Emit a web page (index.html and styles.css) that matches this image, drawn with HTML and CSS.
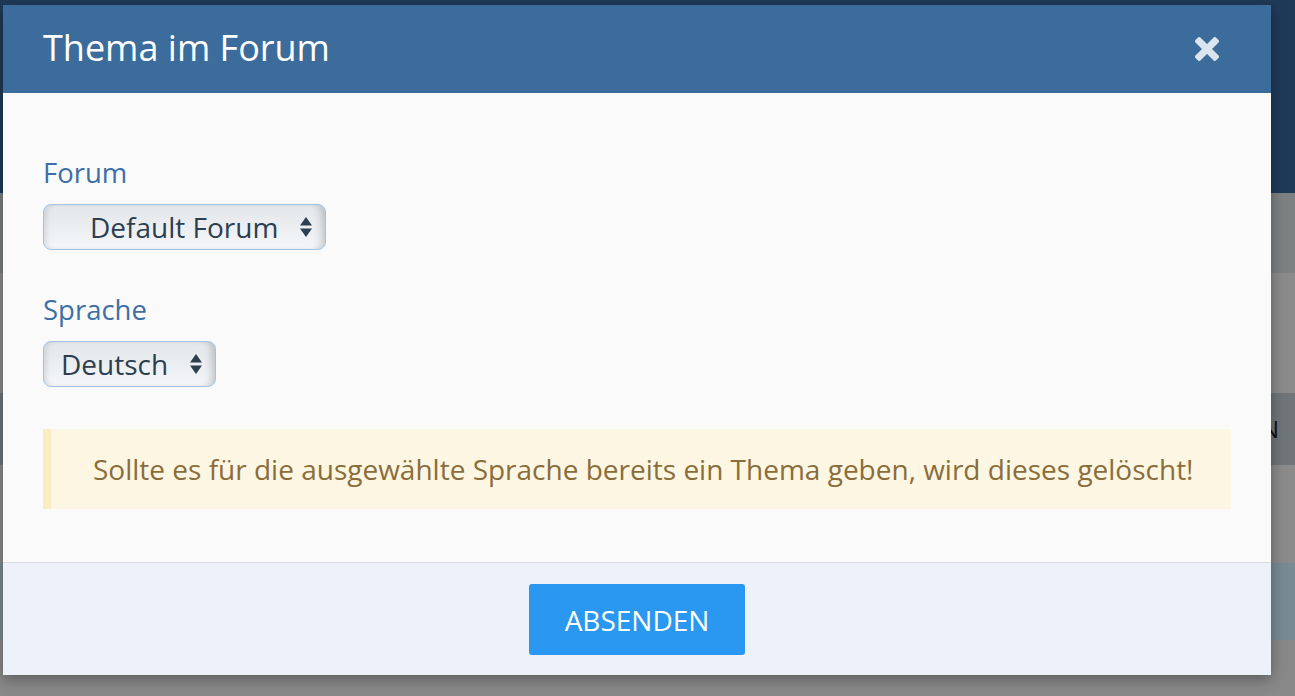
FILE: index.html
```html
<!DOCTYPE html>
<html lang="de">
<head>
<meta charset="UTF-8" />
<meta name="viewport" content="width=device-width, initial-scale=1" />
<title>Thema im Forum</title>
<link rel="stylesheet" href="styles.css">
</head>
<body>

<div class="page">
  <div class="topbar"></div>
  <div class="rows">
    <div class="row row-a"></div>
    <div class="row row-b"></div>
    <div class="row row-c"><span>N</span></div>
    <div class="row row-b row-tall"></div>
    <div class="row row-d"></div>
  </div>
</div>

<div class="modal">
  <div class="modal-header">
    <h2>Thema im Forum</h2>
    <button class="close" type="button" aria-label="Schließen">
      <svg width="24" height="24" viewBox="0 0 24 24">
        <rect x="-2.5" y="8.5" width="29" height="7" rx="2" transform="rotate(45 12 12)" fill="#dbe5ee" />
        <rect x="-2.5" y="8.5" width="29" height="7" rx="2" transform="rotate(-45 12 12)" fill="#dbe5ee" />
      </svg>
    </button>
  </div>

  <form class="modal-body">
    <div class="field">
      <label for="forum">Forum</label>
      <div class="select-wrap select-forum">
        <select id="forum">
          <option>Default Forum</option>
        </select>
        <svg class="arrows" width="14" height="22" viewBox="0 0 14 22">
          <path d="M7 1 L13 9.5 L1 9.5 Z M1 12.5 L13 12.5 L7 21 Z" fill="#2c3e50" />
        </svg>
      </div>
    </div>

    <div class="field">
      <label for="lang">Sprache</label>
      <div class="select-wrap select-lang">
        <select id="lang">
          <option>Deutsch</option>
          <option>English</option>
        </select>
        <svg class="arrows" width="14" height="22" viewBox="0 0 14 22">
          <path d="M7 1 L13 9.5 L1 9.5 Z M1 12.5 L13 12.5 L7 21 Z" fill="#2c3e50" />
        </svg>
      </div>
    </div>

    <div class="alert">
      Sollte es für die ausgewählte Sprache bereits ein Thema geben, wird dieses gelöscht!
    </div>
  </form>

  <div class="modal-footer">
    <button type="submit" class="btn">ABSENDEN</button>
  </div>
</div>

</body>
</html>
```

FILE: styles.css
```css
body {
  margin: 0;
  padding: 0;
  font-family: "Open Sans", Arial, sans-serif;
  background: #898989;
  overflow: hidden;
}
.page {
  height: 696px;
}
.topbar {
  height: 193px;
  background: #1f3a58;
}
.row {
  height: 80px;
  background: #7e8182;
}
.row-b {
  height: 120px;
  background: #8b8b8b;
}
.row-c {
  height: 72px;
  background: #6f7579;
  text-align: right;
  font-size: 24px;
  line-height: 72px;
  color: #111;
  padding-right: 16px;
}
.row-tall {
  height: 98px;
}
.row-d {
  height: 77px;
  background: #788a92;
}

.modal {
  position: absolute;
  left: 3px;
  top: 5px;
  width: 1268px;
  background: #fafafa;
  box-shadow: 0 4px 14px rgba(0,0,0,0.35);
}
.modal-header {
  height: 88px;
  background: #3b6c9b;
  display: flex;
  align-items: center;
  justify-content: space-between;
  padding: 0 52px 0 40px;
}
.modal-header h2 {
  margin: 0 0 4px;
  font-weight: normal;
  font-size: 36px;
  color: #fff;
}
.close {
  background: none;
  border: none;
  padding: 0;
  width: 24px;
  height: 24px;
  cursor: pointer;
}
.modal-body {
  margin: 0;
  padding: 62px 40px 53px;
  border-bottom: 1px solid #dcdcdc;
}
.field {
  margin-bottom: 42px;
}
label {
  display: block;
  font-size: 27.5px;
  line-height: 36px;
  color: #3d6fa6;
  margin-bottom: 13px;
}
.select-wrap {
  position: relative;
  display: inline-block;
}
select {
  appearance: none;
  -webkit-appearance: none;
  height: 46px;
  box-sizing: border-box;
  border: 1.5px solid #a3c2e2;
  border-radius: 8px;
  font-family: "Open Sans", Arial, sans-serif;
  font-size: 28px;
  color: #2c3e50;
  background: linear-gradient(#e3e6ea, #f4f6f8);
  box-shadow: inset 6px 0 6px -4px rgba(0,0,0,0.12), inset -8px 0 8px -5px rgba(0,0,0,0.2);
  padding: 0 40px 0 17px;
  cursor: pointer;
}
.select-forum select {
  width: 283px;
  padding-left: 46px;
}
.select-lang select {
  width: 173px;
}
.arrows {
  position: absolute;
  right: 13px;
  top: 12px;
  pointer-events: none;
}
.alert {
  background: #fcf6e2;
  border-left: 8px solid #f8edc4;
  color: #8a6d3b;
  font-size: 28px;
  line-height: 34px;
  padding: 23px 20px 23px 42px;
}
.modal-footer {
  background: #edf1f9;
  padding: 21px 0 20px;
  text-align: center;
}
.btn {
  width: 216px;
  height: 71px;
  background: #2a97f0;
  color: #fff;
  border: none;
  border-radius: 3px;
  font-family: "Open Sans", Arial, sans-serif;
  font-size: 28px;
  cursor: pointer;
}
```
